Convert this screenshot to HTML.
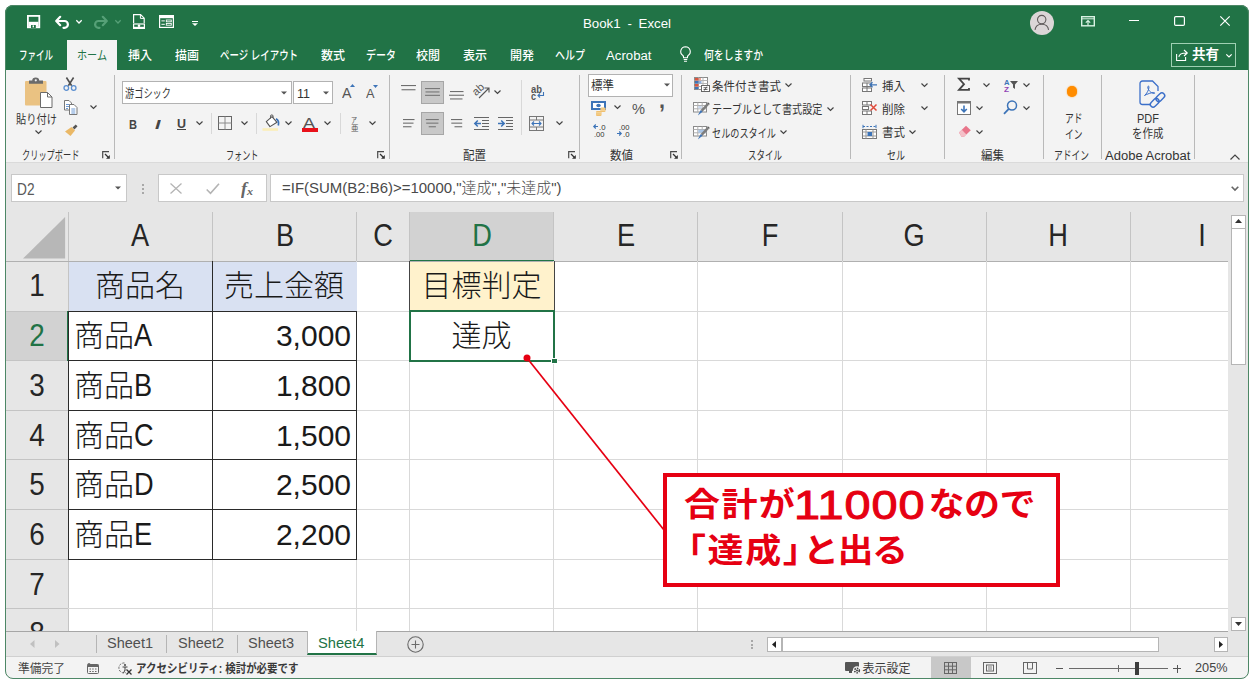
<!DOCTYPE html>
<html lang="ja">
<head>
<meta charset="utf-8">
<title>Book1 - Excel</title>
<style>
html,body{margin:0;padding:0;background:#fff;}
body{width:1255px;height:684px;position:relative;overflow:hidden;font-family:"Liberation Sans","Noto Sans CJK JP",sans-serif;font-size:12px;color:#444;}
#win{position:absolute;left:5px;top:5px;width:1244px;height:674px;border-radius:8px;overflow:hidden;background:#e6e6e6;}
#pg{position:absolute;left:-5px;top:-5px;width:1255px;height:684px;}
#frame{position:absolute;left:5px;top:5px;width:1242px;height:672px;border:1px solid #4d8766;border-radius:8px;pointer-events:none;}
.a{position:absolute;}
.t{position:absolute;white-space:nowrap;line-height:1;transform-origin:0 50%;}
.w{color:#fff;}
#title{left:5px;top:5px;width:1244px;height:65px;background:#217346;}
#hometab{left:67px;top:40px;width:50px;height:31px;background:#f3f3f3;}
#ribbon{left:5px;top:70px;width:1244px;height:92px;background:#f3f3f3;}
#ribline{left:5px;top:162px;width:1244px;height:1px;background:#dadada;}
.sep{position:absolute;width:1px;top:75px;height:84px;background:#b9b9b9;}
.sep2{position:absolute;width:1px;background:#d8d8d8;}
.box{position:absolute;background:#fff;border:1px solid #b2b2b2;box-sizing:border-box;}
.sel{position:absolute;background:#c8c8c8;border:1px solid #a6a6a6;box-sizing:border-box;}
.gl{font-size:11px;color:#444;}
.rt{font-size:12px;color:#333;}
svg{position:absolute;overflow:visible;}
/* grid */
#grid{left:6px;top:212px;width:1222px;height:419px;background:#fff;overflow:hidden;}
.ch{position:absolute;top:212px;height:49px;background:#e6e6e6;border-right:1px solid #c9c9c9;box-sizing:border-box;}
.rh{position:absolute;left:6px;width:62px;background:#e6e6e6;border-bottom:1px solid #c9c9c9;box-sizing:border-box;}
.hl{position:absolute;left:68px;width:1160px;height:1px;background:#d6d6d6;}
.vl{position:absolute;top:261px;width:1px;height:370px;background:#d6d6d6;}
.cell{position:absolute;font-size:30px;color:#1a1a1a;white-space:nowrap;line-height:1;font-weight:300;}
.hd{position:absolute;font-size:29px;color:#262626;white-space:nowrap;line-height:1;font-weight:300;}
.co{position:absolute;font-size:36px;font-weight:700;color:#e60012;white-space:nowrap;line-height:1;transform:scaleY(0.92);}
.dg{font-size:40px;font-weight:normal;-webkit-text-stroke:1px #e60012;letter-spacing:0.840px;transform:scaleX(1.17);transform-origin:0 50%;}
.la{display:inline-block;font-size:32px;transform:scaleX(.85);transform-origin:0 50%;margin-right:-3px;line-height:0;}
</style>
</head>
<body>
<div id="win"><div id="pg">

<!-- ===== title bar ===== -->
<div id="title" class="a"></div>
<div id="hometab" class="a"></div>
<div id="ribbon" class="a"></div>
<div id="ribline" class="a"></div>

<!--TITLE-->
<!-- quick access toolbar -->
<svg style="left:27px;top:15px" width="13" height="13" viewBox="0 0 13 13"><rect x=".9" y=".9" width="11.400" height="11.400" fill="none" stroke="#fff" stroke-width="1.800"/><rect x="1.500" y="6.800" width="10" height="5" fill="#fff"/><rect x="4" y="10" width="4.800" height="3" fill="#217346"/><rect x="5.600" y="10.400" width="1.400" height="2" fill="#fff"/></svg>
<svg style="left:55px;top:16px" width="15" height="12" viewBox="0 0 15 12"><path d="M5.200.800L1.200 5l4 4.200M1.500 5h8a3.400 3.400 0 0 1 0 6.800H8.500" fill="none" stroke="#fff" stroke-width="2.200" stroke-linecap="round" stroke-linejoin="round"/></svg>
<svg style="left:76px;top:20px" width="6" height="4" viewBox="0 0 6 4"><path d="M.3.300L3 3 5.700.300" fill="none" stroke="#fff" stroke-width="1.300"/></svg>
<svg style="left:93px;top:16px" width="15" height="12" viewBox="0 0 15 12"><path d="M9.800.800l4 4.200-4 4.200M13.500 5h-8a3.400 3.400 0 0 0 0 6.800H6.500" fill="none" stroke="#56a077" stroke-width="2.200" stroke-linecap="round" stroke-linejoin="round"/></svg>
<svg style="left:114.500px;top:20px" width="6" height="4" viewBox="0 0 6 4"><path d="M.3.300L3 3 5.700.300" fill="none" stroke="#56a077" stroke-width="1.300"/></svg>
<svg style="left:133px;top:14px" width="12" height="15" viewBox="0 0 12 15"><path d="M.6 9V.6h7l3.6 3.6V9" fill="none" stroke="#fff" stroke-width="1.2"/><path d="M7.4.8v3.6h3.6" fill="none" stroke="#fff" stroke-width="1"/><rect x=".6" y="10" width="10.8" height="3.4" fill="none" stroke="#fff" stroke-width="1.2"/><circle cx="6" cy="11.7" r="1.3" fill="#fff"/><rect x="0" y="14" width="12" height="1" fill="#fff"/></svg>
<svg style="left:159px;top:15px" width="15" height="13" viewBox="0 0 15 13"><rect x=".6" y=".6" width="13.8" height="11.8" fill="none" stroke="#fff" stroke-width="1.2"/><rect x=".6" y=".6" width="13.8" height="2.6" fill="#fff"/><rect x="7.3" y="5" width="5" height="1.8" fill="none" stroke="#fff" stroke-width=".9"/><rect x="7.3" y="8.4" width="5" height="1.8" fill="none" stroke="#fff" stroke-width=".9"/><rect x="2.4" y="5.4" width="3.4" height="1" fill="#fff"/><rect x="2.4" y="8.8" width="3.4" height="1" fill="#fff"/></svg>
<svg style="left:192px;top:21px" width="6" height="5" viewBox="0 0 6 5"><rect x="0" y="0" width="6" height="1" fill="#fff"/><path d="M0 2.2h6L3 5z" fill="#fff"/></svg>
<span class="t w" style="transform:scaleX(1.021);left:583px;top:17px;font-size:13px;word-spacing:3px">Book1 - Excel</span>
<!-- account + window buttons -->
<svg style="left:1030px;top:10.500px" width="24" height="24" viewBox="0 0 24 24"><circle cx="12" cy="12" r="12" fill="#dbd6d7"/><circle cx="11.700" cy="8.600" r="4.200" fill="none" stroke="#5f5a5a" stroke-width="1.100"/><path d="M5 18.800c.5-3.600 3.200-5.600 6.800-5.600s6.300 2 6.800 5.600" fill="none" stroke="#5f5a5a" stroke-width="1.100"/></svg>
<svg style="left:1081px;top:16px" width="14" height="11" viewBox="0 0 14 11"><rect x=".7" y=".7" width="12.600" height="9.100" fill="none" stroke="#d9f2e3" stroke-width="1.400"/><path d="M.7 2.800h12.600" stroke="#d9f2e3" stroke-width="1"/><path d="M7 9.500V4.500M4.800 6.700L7 4.500l2.200 2.200" fill="none" stroke="#d9f2e3" stroke-width="1.200"/></svg>
<div class="a" style="left:1129px;top:20px;width:10px;height:1px;background:#fff"></div>
<svg style="left:1174px;top:16px" width="11" height="10" viewBox="0 0 11 10"><rect x=".6" y=".6" width="9.800" height="8.800" rx="1.200" fill="none" stroke="#fff" stroke-width="1.200"/></svg>
<svg style="left:1220px;top:16px" width="10" height="10" viewBox="0 0 10 10"><path d="M.3.300l9.400 9.400M9.700.300L.3 9.700" stroke="#fff" stroke-width="1.200"/></svg>
<!-- menu tabs -->
<span class="t w" style="transform:scaleX(0.680);left:19px;top:49.500px;font-size:12.500px;font-weight:500">ファイル</span>
<span class="t" style="transform:scaleX(0.808);left:77px;top:49.500px;font-size:12.500px;color:#217346">ホーム</span>
<span class="t w" style="transform:scaleX(0.959);left:128px;top:49.500px;font-size:12.500px;font-weight:500">挿入</span>
<span class="t w" style="transform:scaleX(0.959);left:175px;top:49.500px;font-size:12.500px;font-weight:500">描画</span>
<span class="t w" style="transform:scaleX(0.756);left:220px;top:49.500px;font-size:12.500px;font-weight:500">ページ レイアウト</span>
<span class="t w" style="transform:scaleX(0.959);left:320.500px;top:49.500px;font-size:12.500px;font-weight:500">数式</span>
<span class="t w" style="transform:scaleX(0.800);left:365.500px;top:49.500px;font-size:12.500px;font-weight:500">データ</span>
<span class="t w" style="transform:scaleX(0.959);left:416px;top:49.500px;font-size:12.500px;font-weight:500">校閲</span>
<span class="t w" style="transform:scaleX(0.959);left:462.500px;top:49.500px;font-size:12.500px;font-weight:500">表示</span>
<span class="t w" style="transform:scaleX(0.959);left:509.500px;top:49.500px;font-size:12.500px;font-weight:500">開発</span>
<span class="t w" style="transform:scaleX(0.800);left:555px;top:49.500px;font-size:12.500px;font-weight:500">ヘルプ</span>
<span class="t w" style="transform:scaleX(1.056);left:606px;top:49.500px;font-size:12.500px;font-weight:500">Acrobat</span>
<svg style="left:680px;top:46px" width="11" height="17" viewBox="0 0 11 17"><path d="M5.500.7a4.800 4.800 0 0 0-2.600 8.800c.5.500.7 1.200.7 2.300h3.800c0-1.100.2-1.800.7-2.300A4.800 4.800 0 0 0 5.500.7z" fill="none" stroke="#fff" stroke-width="1.100"/><path d="M3.700 13.500h3.600M4 15.300h3" stroke="#fff" stroke-width="1.100"/></svg>
<span class="t w" style="transform:scaleX(0.787);left:704px;top:49.500px;font-size:12.500px;font-weight:500">何をしますか</span>
<!-- share -->
<div class="a" style="left:1171px;top:43px;width:65px;height:24px;box-sizing:border-box;border:1.500px solid #9fd0b3"></div>
<svg style="left:1176px;top:49px" width="12" height="12" viewBox="0 0 12 12"><path d="M.6 5v6.500h9V8" fill="none" stroke="#fff" stroke-width="1.100"/><path d="M2.800 7.800C3.200 5.200 5.500 4 10.500 4M8 1l3.300 3L8 7" fill="none" stroke="#fff" stroke-width="1.100" stroke-linejoin="round"/></svg>
<span class="t w" style="left:1192px;top:48px;font-size:13.500px;font-weight:bold">共有</span>
<svg style="left:1226px;top:54px" width="6" height="4" viewBox="0 0 6 4"><path d="M.3.300L3 3 5.700.300" fill="none" stroke="#fff" stroke-width="1.200"/></svg>
<!--/TITLE-->

<!--RIBBON-->
<svg style="left:25px;top:78px" width="28" height="30" viewBox="0 0 28 30"><rect x="0" y="3" width="21.500" height="24.500" rx="1" fill="#eac282"/><path d="M4 2.500h3.200a3.500 3 0 0 1 7 0H18v3.200H4z" fill="#6b6b6b"/><circle cx="10.800" cy="2.300" r="1.100" fill="#f3f3f3"/><path d="M15.500 14.500h7l4.500 4.500v10.500h-11.500z" fill="#fff" stroke="#6b6b6b" stroke-width="1"/><path d="M22.500 14.500v4.500h4.500" fill="none" stroke="#6b6b6b" stroke-width="1"/></svg>
<span class="t rt" style="transform:scaleX(0.854);left:16px;top:113.9px;font-size:12px;">貼り付け</span>
<svg style="left:34.5px;top:130.3px" width="7" height="4" viewBox="0 0 7 4"><path d="M.5.500l3 3 3-3" fill="none" stroke="#444" stroke-width="1.200"/></svg>
<svg style="left:63px;top:77px" width="14" height="14" viewBox="0 0 14 14"><path d="M3.400.5l5.300 8.300M10.600.5l-5.300 8.300" stroke="#505050" stroke-width="1.600" fill="none"/><circle cx="3.300" cy="11" r="2.300" fill="none" stroke="#5b8fd0" stroke-width="1.300"/><circle cx="10.700" cy="11" r="2.300" fill="none" stroke="#5b8fd0" stroke-width="1.300"/></svg>
<svg style="left:63.5px;top:100px" width="14" height="15" viewBox="0 0 14 15"><path d="M.5.500h4.500l2.500 2.500v7h-7z" fill="#fff" stroke="#777" stroke-width="1"/><path d="M2 4.500h3.500M2 6.500h3.500M2 8.500h2" stroke="#5b8fd0" stroke-width=".9"/><path d="M5.500 4.500h4.500l3 3v7h-7.500z" fill="#fff" stroke="#777" stroke-width="1"/><path d="M7.300 9h4M7.300 11h4M7.300 13h4" stroke="#5b8fd0" stroke-width=".9"/></svg>
<svg style="left:89.5px;top:104.8px" width="7" height="4" viewBox="0 0 7 4"><path d="M.5.500l3 3 3-3" fill="none" stroke="#444" stroke-width="1.200"/></svg>
<svg style="left:64px;top:124px" width="14" height="12" viewBox="0 0 14 12"><path d="M8.500 3.500l3.200-3 1.800 1.800-3 3.200z" fill="#555"/><path d="M1 7.500l6.500-4.500 3.500 3.500-4.500 5.500z" fill="#eab866"/></svg>
<span class="t rt" style="transform:scaleX(0.684);left:21.5px;top:150.4px;font-size:12px;">クリップボード</span>
<svg style="left:102px;top:151px" width="8" height="8" viewBox="0 0 8 8"><path d="M.7 7.200V.700h6.300" fill="none" stroke="#4a4a4a" stroke-width="1.200"/><path d="M3 3l3.500 3.500" stroke="#333" stroke-width="1.200"/><path d="M7.800 4v3.800H4z" fill="#333"/></svg>
<div class="sep" style="left:113.5px"></div>
<div class="box" style="left:122px;top:81px;width:170px;height:23px"></div>
<span class="t rt" style="transform:scaleX(0.766);left:124.5px;top:87.9px;font-size:12px;">游ゴシック</span>
<svg style="left:281px;top:91px" width="6" height="4" viewBox="0 0 6 4"><path d="M0 .5h6L3 3.500z" fill="#555"/></svg>
<div class="box" style="left:293px;top:81px;width:40px;height:23px"></div>
<span class="t rt" style="transform:scaleX(0.963);left:296.5px;top:87.4px;font-size:13px;">11</span>
<svg style="left:323px;top:91px" width="6" height="4" viewBox="0 0 6 4"><path d="M0 .5h6L3 3.500z" fill="#555"/></svg>
<span class="t rt" style="transform:scaleX(0.949);left:342px;top:85.4px;font-size:15px;color:#555">A</span>
<svg style="left:350px;top:84px" width="5" height="3" viewBox="0 0 5 3"><path d="M0 3L2.500 0 5 3z" fill="#3d74b8"/></svg>
<span class="t rt" style="transform:scaleX(0.943);left:366px;top:86.65px;font-size:13.5px;color:#555">A</span>
<svg style="left:373px;top:85px" width="5" height="3" viewBox="0 0 5 3"><path d="M0 0h5L2.500 3z" fill="#3d74b8"/></svg>
<span class="t rt" style="transform:scaleX(0.821);left:128.5px;top:117.65px;font-size:13.5px;font-weight:bold;color:#444">B</span>
<span class="t rt" style="transform:scaleX(1.461);left:154.5px;top:117.65px;font-size:13.5px;font-weight:bold;font-style:italic;color:#444">I</span>
<span class="t rt" style="transform:scaleX(0.958);left:176.5px;top:117.4px;font-size:13px;font-weight:bold;text-decoration:underline;color:#444">U</span>
<svg style="left:195.5px;top:120.8px" width="7" height="4" viewBox="0 0 7 4"><path d="M.5.500l3 3 3-3" fill="none" stroke="#444" stroke-width="1.200"/></svg>
<div class="sep2" style="left:211px;top:113px;height:21px"></div>
<svg style="left:218px;top:116px" width="14" height="14" viewBox="0 0 14 14"><rect x=".5" y=".5" width="13" height="13" fill="none" stroke="#666" stroke-width="1"/><path d="M7 .5v13M.5 7h13" stroke="#8a8a8a" stroke-width="1"/></svg>
<svg style="left:240.5px;top:120.8px" width="7" height="4" viewBox="0 0 7 4"><path d="M.5.500l3 3 3-3" fill="none" stroke="#444" stroke-width="1.200"/></svg>
<div class="sep2" style="left:256px;top:113px;height:21px"></div>
<svg style="left:264px;top:114px" width="15" height="17" viewBox="0 0 15 17"><path d="M2.300 7.600L8 2.600l5 5.700-7 4.300z" fill="#fff" stroke="#555" stroke-width="1.100" stroke-linejoin="round"/><path d="M6.500 4.500V2.200a1.300 1.300 0 0 1 2.600 0v1.500" fill="none" stroke="#555" stroke-width="1"/><path d="M12 4.800c2.600 1.500 3 4 2.300 6.700" fill="none" stroke="#3d74b8" stroke-width="1.700"/><rect x="-1.500" y="14.200" width="15.500" height="2.600" fill="#fbeeb8"/></svg>
<svg style="left:285.0px;top:120.8px" width="7" height="4" viewBox="0 0 7 4"><path d="M.5.500l3 3 3-3" fill="none" stroke="#444" stroke-width="1.200"/></svg>
<span class="t rt" style="transform:scaleX(1.198);left:303px;top:115.4px;font-size:15px;color:#555">A</span>
<div class="a" style="left:302px;top:128px;width:16px;height:3.500px;background:#e8111a"></div>
<svg style="left:324.0px;top:120.8px" width="7" height="4" viewBox="0 0 7 4"><path d="M.5.500l3 3 3-3" fill="none" stroke="#444" stroke-width="1.200"/></svg>
<div class="sep2" style="left:340px;top:113px;height:21px"></div>
<span class="t rt" style="transform:scaleX(0.750);left:351px;top:117.4px;font-size:8px;color:#555">ア</span>
<span class="t rt" style="transform:scaleX(0.938);left:351px;top:124.9px;font-size:8px;color:#555">亜</span>
<svg style="left:369.0px;top:120.8px" width="7" height="4" viewBox="0 0 7 4"><path d="M.5.500l3 3 3-3" fill="none" stroke="#444" stroke-width="1.200"/></svg>
<span class="t rt" style="transform:scaleX(0.677);left:226px;top:150.4px;font-size:12px;">フォント</span>
<svg style="left:377px;top:151px" width="8" height="8" viewBox="0 0 8 8"><path d="M.7 7.200V.700h6.300" fill="none" stroke="#4a4a4a" stroke-width="1.200"/><path d="M3 3l3.500 3.500" stroke="#333" stroke-width="1.200"/><path d="M7.800 4v3.800H4z" fill="#333"/></svg>
<div class="sep" style="left:388.5px"></div>
<svg style="left:401px;top:85.3px" width="16" height="8.4" viewBox="0 0 16 8.4"><rect x="0" y="0.0" width="15" height="1.100" fill="#6e6e6e"/><rect x="0.5" y="4.2" width="14" height="1.100" fill="#6e6e6e"/></svg>
<div class="sel" style="left:421px;top:81px;width:23px;height:23px"></div>
<svg style="left:425px;top:88.1px" width="16" height="10.2" viewBox="0 0 16 10.2"><rect x="0" y="0.0" width="15" height="1.100" fill="#777"/><rect x="0.5" y="3.4" width="14" height="1.100" fill="#777"/><rect x="0" y="6.8" width="15" height="1.100" fill="#777"/></svg>
<svg style="left:449px;top:91px" width="16" height="11.1" viewBox="0 0 16 11.1"><rect x="1" y="0.0" width="13.5" height="1.100" fill="#6e6e6e"/><rect x="0" y="3.7" width="15" height="1.100" fill="#6e6e6e"/><rect x="1" y="7.4" width="12.5" height="1.100" fill="#6e6e6e"/></svg>
<span class="t" style="left:472px;top:84px;font-size:11px;color:#555;transform:rotate(-42deg);transform-origin:50% 50%">ab</span>
<svg style="left:478px;top:86px" width="12" height="13" viewBox="0 0 12 13"><path d="M1 12L10.500 2.500M6.500 2h4.500v4.500" fill="none" stroke="#555" stroke-width="1.100"/></svg>
<svg style="left:493.5px;top:89.8px" width="7" height="4" viewBox="0 0 7 4"><path d="M.5.500l3 3 3-3" fill="none" stroke="#444" stroke-width="1.200"/></svg>
<svg style="left:402.5px;top:119.3px" width="16" height="10.8" viewBox="0 0 16 10.8"><rect x="0" y="0.0" width="11.5" height="1.100" fill="#6e6e6e"/><rect x="0" y="3.6" width="10.5" height="1.100" fill="#6e6e6e"/><rect x="0" y="7.2" width="8.5" height="1.100" fill="#6e6e6e"/></svg>
<div class="sel" style="left:421px;top:112px;width:23px;height:23px"></div>
<svg style="left:425px;top:119.3px" width="16" height="10.8" viewBox="0 0 16 10.8"><rect x="0.8" y="0.0" width="13" height="1.100" fill="#777"/><rect x="1.2" y="3.6" width="12.2" height="1.100" fill="#777"/><rect x="3.7" y="7.2" width="7.2" height="1.100" fill="#777"/></svg>
<svg style="left:448px;top:119.3px" width="16" height="10.8" viewBox="0 0 16 10.8"><rect x="3" y="0.0" width="11.2" height="1.100" fill="#6e6e6e"/><rect x="3.3" y="3.6" width="10.9" height="1.100" fill="#6e6e6e"/><rect x="6.5" y="7.2" width="7.7" height="1.100" fill="#6e6e6e"/></svg>
<svg style="left:474px;top:117px" width="15" height="13" viewBox="0 0 15 13"><rect x="0" y="0" width="15" height="1" fill="#666"/><rect x="0" y="12" width="15" height="1" fill="#666"/><rect x="8" y="3" width="7" height="1" fill="#666"/><rect x="8" y="6" width="7" height="1" fill="#666"/><rect x="8" y="9" width="7" height="1" fill="#666"/><path d="M7 6.500H1M3.800 3.500l-3 3 3 3" fill="none" stroke="#3d74b8" stroke-width="1.500"/></svg>
<svg style="left:498px;top:117px" width="15" height="13" viewBox="0 0 15 13"><rect x="0" y="0" width="15" height="1" fill="#666"/><rect x="0" y="12" width="15" height="1" fill="#666"/><rect x="8" y="3" width="7" height="1" fill="#666"/><rect x="8" y="6" width="7" height="1" fill="#666"/><rect x="8" y="9" width="7" height="1" fill="#666"/><path d="M0 6.500h6M3.200 3.500l3 3-3 3" fill="none" stroke="#3d74b8" stroke-width="1.500"/></svg>
<div class="sep2" style="left:521px;top:80px;height:55px"></div>
<span class="t rt" style="transform:scaleX(0.942);left:531px;top:85.4px;font-size:10px;font-weight:bold;color:#555">ab</span>
<span class="t rt" style="transform:scaleX(0.899);left:531px;top:92.4px;font-size:10px;font-weight:bold;color:#555">c</span>
<svg style="left:537px;top:92px" width="7" height="6" viewBox="0 0 7 6"><path d="M6.500 0v3.500H1M3 1.500l-2 2 2 2" fill="none" stroke="#3d74b8" stroke-width="1.100"/></svg>
<svg style="left:528.5px;top:115.5px" width="15" height="15" viewBox="0 0 15 15"><rect x=".5" y=".5" width="14" height="14" fill="none" stroke="#777" stroke-width="1"/><path d="M.5 4h14M.5 11h14M7.500.5v3.500M7.500 11v3.500" stroke="#777" stroke-width="1"/><path d="M3 7.500h9M5 5.500l-2 2 2 2M10 5.500l2 2-2 2" fill="none" stroke="#3d74b8" stroke-width="1.100"/></svg>
<svg style="left:555.5px;top:120.8px" width="7" height="4" viewBox="0 0 7 4"><path d="M.5.500l3 3 3-3" fill="none" stroke="#444" stroke-width="1.200"/></svg>
<span class="t rt" style="transform:scaleX(0.958);left:463px;top:150.4px;font-size:12px;">配置</span>
<svg style="left:568px;top:151px" width="8" height="8" viewBox="0 0 8 8"><path d="M.7 7.200V.700h6.300" fill="none" stroke="#4a4a4a" stroke-width="1.200"/><path d="M3 3l3.500 3.500" stroke="#333" stroke-width="1.200"/><path d="M7.800 4v3.800H4z" fill="#333"/></svg>
<div class="sep" style="left:579px"></div>
<div class="box" style="left:588px;top:74px;width:85px;height:22.500px"></div>
<span class="t rt" style="transform:scaleX(0.958);left:590.5px;top:79.9px;font-size:12px;">標準</span>
<svg style="left:663.500px;top:83px" width="6" height="4" viewBox="0 0 6 4"><path d="M0 .5h6L3 3.500z" fill="#555"/></svg>
<svg style="left:591px;top:100.5px" width="15" height="15" viewBox="0 0 15 15"><rect x="1" y="1" width="13" height="7" fill="#fff" stroke="#3d74b8" stroke-width="2"/><ellipse cx="7.500" cy="4.500" rx="2.200" ry="1.800" fill="#3d74b8"/><rect x="9.500" y="6.500" width="5" height="4.500" rx="1" fill="#f0c070"/><rect x="5" y="10" width="5.500" height="5" rx="1" fill="#f0c070"/><path d="M9.500 8h5M9.500 9.500h5M5 11.500h5.500M5 13h5.500" stroke="#f7ddb0" stroke-width=".6"/></svg>
<svg style="left:613.5px;top:105.3px" width="7" height="4" viewBox="0 0 7 4"><path d="M.5.500l3 3 3-3" fill="none" stroke="#444" stroke-width="1.200"/></svg>
<span class="t rt" style="transform:scaleX(0.942);left:631.5px;top:100.65px;font-size:15.5px;color:#555">%</span>
<span class="t rt" style="transform:scaleX(0.899);left:658.5px;top:87.9px;font-size:24px;font-weight:bold;color:#555">,</span>
<svg style="left:593px;top:124px" width="12" height="13" viewBox="0 0 12 13"><path d="M5 2.500H.8M2.800.5l-2 2 2 2" fill="none" stroke="#3d74b8" stroke-width="1.200"/></svg>
<span class="t rt" style="transform:scaleX(0.974);left:598.5px;top:124.4px;font-size:8px;color:#333">.0</span>
<span class="t rt" style="transform:scaleX(0.944);left:594px;top:131.4px;font-size:8px;color:#333">.00</span>
<span class="t rt" style="transform:scaleX(0.944);left:618.5px;top:124.4px;font-size:8px;color:#333">.00</span>
<svg style="left:617px;top:131px" width="6" height="5" viewBox="0 0 6 5"><path d="M0 2.500h4.200M2.200.5l2 2-2 2" fill="none" stroke="#3d74b8" stroke-width="1.200"/></svg>
<span class="t rt" style="transform:scaleX(0.974);left:622.5px;top:131.4px;font-size:8px;color:#333">.0</span>
<span class="t rt" style="transform:scaleX(0.958);left:610px;top:150.4px;font-size:12px;">数値</span>
<svg style="left:669.5px;top:151px" width="8" height="8" viewBox="0 0 8 8"><path d="M.7 7.200V.700h6.300" fill="none" stroke="#4a4a4a" stroke-width="1.200"/><path d="M3 3l3.500 3.500" stroke="#333" stroke-width="1.200"/><path d="M7.800 4v3.800H4z" fill="#333"/></svg>
<div class="sep" style="left:680.5px"></div>
<svg style="left:693.5px;top:77px" width="16" height="15" viewBox="0 0 16 15"><rect x=".5" y=".5" width="13" height="12" fill="#fff" stroke="#8a8a8a" stroke-width="1"/><path d="M4.500.5v12M9 .5v12M.5 3.500h13M.5 6.500h13M.5 9.500h13" stroke="#b5b5b5" stroke-width="1"/><rect x="1" y="1" width="3.500" height="2.500" fill="#d9553f"/><rect x="1" y="4" width="3.500" height="2.500" fill="#3d74b8"/><rect x="1" y="7" width="3.500" height="2.500" fill="#d9553f"/><rect x="1" y="10" width="3.500" height="2" fill="#3d74b8"/><rect x="5" y="4" width="2.500" height="2.500" fill="#8fb0dc"/><rect x="5" y="1" width="2" height="2.500" fill="#eba79a"/><rect x="7.500" y="8.500" width="8" height="6" fill="#fff" stroke="#666" stroke-width="1"/><path d="M9.500 10.700h4M9.500 12.500h4M12.800 9.600l-2.500 4" stroke="#444" stroke-width=".8"/></svg>
<span class="t rt" style="transform:scaleX(0.958);left:711.5px;top:80.9px;font-size:12px;">条件付き書式</span>
<svg style="left:785.0px;top:83.3px" width="7" height="4" viewBox="0 0 7 4"><path d="M.5.500l3 3 3-3" fill="none" stroke="#444" stroke-width="1.200"/></svg>
<svg style="left:693px;top:102px" width="17" height="14" viewBox="0 0 17 14"><rect x=".5" y=".5" width="13" height="9.500" fill="#fff" stroke="#8a8a8a" stroke-width="1"/><path d="M4.800.5v9.500M9.200.5v9.500M.5 3.500h13M.5 6.800h13" stroke="#b0b0b0" stroke-width="1"/><rect x="5.300" y="4" width="3.400" height="2.500" fill="#c9d8ee"/><path d="M14.200 1L16 2.800 9.500 9.800 7.700 8z" fill="#7d7d7d"/><path d="M7.700 8l1.800 1.800L4.800 13.500z" fill="#3d74b8"/><path d="M15 .2l1.800 1.800-.8.800-1.800-1.800z" fill="#555"/></svg>
<span class="t rt" style="transform:scaleX(0.844);left:711.5px;top:104.4px;font-size:12px;">テーブルとして書式設定</span>
<svg style="left:826.5px;top:106.8px" width="7" height="4" viewBox="0 0 7 4"><path d="M.5.500l3 3 3-3" fill="none" stroke="#444" stroke-width="1.200"/></svg>
<svg style="left:693px;top:125.5px" width="17" height="14" viewBox="0 0 17 14"><rect x=".5" y=".5" width="13" height="9.500" fill="#fff" stroke="#8a8a8a" stroke-width="1"/><path d="M4.800.5v9.500M9.200.5v9.500M.5 3.500h13M.5 6.800h13" stroke="#b0b0b0" stroke-width="1"/><rect x="5.300" y="3.800" width="7.800" height="3" fill="#a9c4e4"/><path d="M14.200 1L16 2.800 9.500 9.800 7.700 8z" fill="#7d7d7d"/><path d="M7.700 8l1.800 1.800L4.800 13.500z" fill="#3d74b8"/><path d="M15 .2l1.800 1.800-.8.800-1.800-1.800z" fill="#555"/></svg>
<span class="t rt" style="transform:scaleX(0.762);left:711.5px;top:127.9px;font-size:12px;">セルのスタイル</span>
<svg style="left:780.0px;top:130.3px" width="7" height="4" viewBox="0 0 7 4"><path d="M.5.500l3 3 3-3" fill="none" stroke="#444" stroke-width="1.200"/></svg>
<span class="t rt" style="transform:scaleX(0.708);left:747.5px;top:150.4px;font-size:12px;">スタイル</span>
<div class="sep" style="left:849.5px"></div>
<svg style="left:861.5px;top:77.5px" width="16" height="14" viewBox="0 0 16 14"><rect x=".5" y="5" width="9" height="3.500" fill="#fff" stroke="#777" stroke-width="1"/><rect x=".5" y="10" width="9" height="3.500" fill="#fff" stroke="#777" stroke-width="1"/><rect x="2" y=".5" width="7.500" height="2.500" fill="#fff" stroke="#777" stroke-width="1"/><path d="M5 5v8.500" stroke="#777" stroke-width="1"/><path d="M15 6.800H8M10.500 4.300L8 6.800l2.500 2.500" fill="none" stroke="#3d74b8" stroke-width="1.300"/></svg>
<span class="t rt" style="transform:scaleX(0.958);left:881.5px;top:80.9px;font-size:12px;">挿入</span>
<svg style="left:921.0px;top:83.3px" width="7" height="4" viewBox="0 0 7 4"><path d="M.5.500l3 3 3-3" fill="none" stroke="#444" stroke-width="1.200"/></svg>
<svg style="left:861.5px;top:101px" width="16" height="14" viewBox="0 0 16 14"><rect x=".5" y=".5" width="9" height="3.500" fill="#fff" stroke="#777" stroke-width="1"/><rect x=".5" y="10" width="9" height="3.500" fill="#fff" stroke="#777" stroke-width="1"/><rect x=".5" y="5.500" width="6" height="3" fill="#fff" stroke="#777" stroke-width="1"/><path d="M5 .5v3.500M5 10v3.500" stroke="#777" stroke-width="1"/><path d="M8.500 3.500l6 6M14.500 3.500l-6 6" stroke="#e04a3a" stroke-width="1.500"/></svg>
<span class="t rt" style="transform:scaleX(0.958);left:881.5px;top:103.9px;font-size:12px;">削除</span>
<svg style="left:921.0px;top:105.8px" width="7" height="4" viewBox="0 0 7 4"><path d="M.5.500l3 3 3-3" fill="none" stroke="#444" stroke-width="1.200"/></svg>
<svg style="left:861.5px;top:123.5px" width="16" height="16" viewBox="0 0 16 16"><path d="M1 2.500h13" stroke="#3d74b8" stroke-width="1" stroke-dasharray="2 1.500"/><path d="M1 .8v3.400M14 .8v3.400" stroke="#3d74b8" stroke-width="1"/><rect x=".5" y="5.500" width="14" height="9" fill="#fff" stroke="#777" stroke-width="1"/><path d="M4 5.500v9M11 5.500v9M.5 8h14M.5 12h14" stroke="#999" stroke-width="1"/><rect x="5.500" y="8" width="4.500" height="4" fill="#3d74b8"/></svg>
<span class="t rt" style="transform:scaleX(0.958);left:881.5px;top:127.4px;font-size:12px;">書式</span>
<svg style="left:909.0px;top:129.8px" width="7" height="4" viewBox="0 0 7 4"><path d="M.5.500l3 3 3-3" fill="none" stroke="#444" stroke-width="1.200"/></svg>
<span class="t rt" style="transform:scaleX(0.750);left:887px;top:150.4px;font-size:12px;">セル</span>
<div class="sep" style="left:944px"></div>
<svg style="left:958px;top:78px" width="12" height="12.5" viewBox="0 0 12 12.5"><path d="M11 2.500V.700H1l5 5.500-5 5.600h10V10" fill="none" stroke="#444" stroke-width="1.800"/></svg>
<svg style="left:983.0px;top:83.3px" width="7" height="4" viewBox="0 0 7 4"><path d="M.5.500l3 3 3-3" fill="none" stroke="#444" stroke-width="1.200"/></svg>
<span class="t rt" style="transform:scaleX(0.951);left:1004px;top:79.4px;font-size:8px;font-weight:bold;color:#3d74b8">A</span>
<span class="t rt" style="transform:scaleX(1.022);left:1004px;top:86.4px;font-size:8px;font-weight:bold;color:#9145b5">Z</span>
<svg style="left:1010px;top:81px" width="8" height="9" viewBox="0 0 8 9"><path d="M0 0h8L5 3.500V8L3 6.500V3.500z" fill="#555"/></svg>
<svg style="left:1022.5px;top:83.3px" width="7" height="4" viewBox="0 0 7 4"><path d="M.5.500l3 3 3-3" fill="none" stroke="#444" stroke-width="1.200"/></svg>
<svg style="left:957px;top:100.5px" width="14" height="14" viewBox="0 0 14 14"><rect x=".5" y=".5" width="13" height="13" fill="#fff" stroke="#777" stroke-width="1"/><rect x=".5" y=".5" width="13" height="2" fill="#777"/><path d="M7 4.500v6M4.200 8l2.800 2.800L9.800 8" fill="none" stroke="#3d74b8" stroke-width="1.600"/></svg>
<svg style="left:976.0px;top:106.3px" width="7" height="4" viewBox="0 0 7 4"><path d="M.5.500l3 3 3-3" fill="none" stroke="#444" stroke-width="1.200"/></svg>
<svg style="left:1003px;top:100px" width="15" height="15" viewBox="0 0 15 15"><circle cx="9" cy="5.500" r="4.500" fill="none" stroke="#3d74b8" stroke-width="1.500"/><path d="M5.800 8.800L1 13.800" stroke="#3d74b8" stroke-width="1.800"/></svg>
<svg style="left:1022.5px;top:106.3px" width="7" height="4" viewBox="0 0 7 4"><path d="M.5.500l3 3 3-3" fill="none" stroke="#444" stroke-width="1.200"/></svg>
<svg style="left:957.5px;top:125px" width="14" height="12" viewBox="0 0 14 12"><path d="M1 7.500L8 .8l4.800 4.500-6.800 6.500H3.500z" fill="#e8758a"/><path d="M1 7.500l2.800-2.700 4.600 4.600-2.400 2.400H3.500z" fill="#f4c0c8"/></svg>
<svg style="left:976.0px;top:129.8px" width="7" height="4" viewBox="0 0 7 4"><path d="M.5.500l3 3 3-3" fill="none" stroke="#444" stroke-width="1.200"/></svg>
<span class="t rt" style="transform:scaleX(0.958);left:981px;top:150.4px;font-size:12px;">編集</span>
<div class="sep" style="left:1043px"></div>
<div class="a" style="left:1066.500px;top:86px;width:10.500px;height:10.500px;border-radius:50%;background:#ff8c00;box-shadow:0 0 1.500px #ff8c00"></div>
<span class="t rt" style="transform:scaleX(0.729);left:1064.5px;top:113.4px;font-size:12px;">アド</span>
<span class="t rt" style="transform:scaleX(0.729);left:1064.5px;top:128.70000000000002px;font-size:12px;">イン</span>
<span class="t rt" style="transform:scaleX(0.729);left:1054px;top:150.4px;font-size:12px;">アドイン</span>
<div class="sep" style="left:1101px"></div>
<svg style="left:1139px;top:80px" width="26" height="28" viewBox="0 0 26 28"><path d="M12 24.500H3.500a2.500 2.500 0 0 1-2.500-2.500V3.500A2.500 2.500 0 0 1 3.500 1h10l5.500 5.500V11" fill="none" stroke="#3b6fc9" stroke-width="1.300"/><path d="M5.500 15.500c2-1.500 4.500-5.500 4.500-8.500 0-1.200-1.200-1.200-1.200 0 0 3 3 6 6 6.500 1.200.2 1.200-1 0-1-2.500 0-6.500 1.500-9.300 3z" fill="none" stroke="#3b6fc9" stroke-width="1"/><g transform="rotate(-45 18.500 20)" fill="none" stroke="#3b6fc9" stroke-width="1.400"><rect x="9.500" y="17.200" width="10" height="5.600" rx="2.800"/><rect x="17.500" y="17.200" width="10" height="5.600" rx="2.800"/></g></svg>
<span class="t rt" style="transform:scaleX(0.880);left:1137px;top:112.65px;font-size:12.5px;">PDF</span>
<span class="t rt" style="transform:scaleX(0.875);left:1132px;top:128.4px;font-size:12px;">を作成</span>
<span class="t rt" style="transform:scaleX(1.042);left:1104.5px;top:150.15px;font-size:12.5px;">Adobe Acrobat</span>
<div class="sep" style="left:1194px"></div>
<svg style="left:1229.5px;top:153.5px" width="10" height="6" viewBox="0 0 10 6"><path d="M.5 5.500l4.500-4.500 4.500 4.500" fill="none" stroke="#444" stroke-width="1.200"/></svg>
<!--/RIBBON-->

<!--FORMULA-->
<div class="box" style="left:11px;top:174px;width:116px;height:28px;border-color:#c8c8c8"></div>
<span class="t" style="transform:scaleX(0.856);left:17px;top:182.0px;font-size:16px;color:#5a5a5a">D2</span>
<svg style="left:115px;top:186px" width="6" height="4" viewBox="0 0 6 4"><path d="M0 .5h6L3 3.500z" fill="#555"/></svg>
<div class="a" style="left:141.500px;top:183.5px;width:2px;height:2px;background:#a8a8a8"></div>
<div class="a" style="left:141.500px;top:187.5px;width:2px;height:2px;background:#a8a8a8"></div>
<div class="a" style="left:141.500px;top:191.5px;width:2px;height:2px;background:#a8a8a8"></div>
<div class="box" style="left:157.500px;top:174px;width:109px;height:28px;border-color:#c8c8c8"></div>
<svg style="left:170px;top:183px" width="12" height="11" viewBox="0 0 12 11"><path d="M.5.500l11 10M11.500.500l-11 10" stroke="#b4b4b4" stroke-width="1.300"/></svg>
<svg style="left:205.5px;top:183px" width="14" height="11" viewBox="0 0 14 11"><path d="M.7 6.500l3.800 3.800L13 .7" fill="none" stroke="#b4b4b4" stroke-width="1.600"/></svg>
<span class="t" style="transform:scaleX(1.126);left:241px;top:180.5px;font-size:16px;font-family:'Liberation Serif',serif;font-style:italic;font-weight:bold;color:#666">f</span>
<span class="t" style="transform:scaleX(1.091);left:247px;top:185.5px;font-size:11px;font-family:'Liberation Serif',serif;font-style:italic;font-weight:bold;color:#666">x</span>
<div class="box" style="left:269.500px;top:174px;width:974px;height:28px;border-color:#c8c8c8"></div>
<span class="t" style="transform:scaleX(1.032);left:282px;top:180.75px;font-size:14.5px;color:#4a4a4a;font-weight:300">=IF(SUM(B2:B6)>=10000,"達成","未達成")</span>
<svg style="left:1231px;top:185.5px" width="8" height="5" viewBox="0 0 8 5"><path d="M.7.700l3.300 3.300 3.300-3.300" fill="none" stroke="#666" stroke-width="1.600"/></svg>
<!--/FORMULA-->

<!--GRID-->
<div class="a" id="grid" style=""></div>
<div class="a" style="left:6px;top:212px;width:1222px;height:49px;background:#e6e6e6"></div>
<div class="a" style="left:6px;top:261px;width:62px;height:370px;background:#e6e6e6"></div>
<div class="a" style="left:410px;top:212px;width:144px;height:49px;background:#d2d2d2"></div>
<div class="a" style="left:6px;top:311px;width:62px;height:49.5px;background:#d2d2d2"></div>
<svg style="left:23.4px;top:216.7px" width="43" height="42" viewBox="0 0 43 42"><path d="M42.100 0V41.600H0z" fill="#b7b7b7"/></svg>
<div class="a" style="left:212.0px;top:212px;width:1px;height:49px;background:#c4c4c4"></div>
<div class="a" style="left:356.2px;top:212px;width:1px;height:49px;background:#c4c4c4"></div>
<div class="a" style="left:409.3px;top:212px;width:1px;height:49px;background:#c4c4c4"></div>
<div class="a" style="left:553.3px;top:212px;width:1px;height:49px;background:#c4c4c4"></div>
<div class="a" style="left:697.3px;top:212px;width:1px;height:49px;background:#c4c4c4"></div>
<div class="a" style="left:841.5px;top:212px;width:1px;height:49px;background:#c4c4c4"></div>
<div class="a" style="left:985.7px;top:212px;width:1px;height:49px;background:#c4c4c4"></div>
<div class="a" style="left:1129.9px;top:212px;width:1px;height:49px;background:#c4c4c4"></div>
<div class="a" style="left:67.500px;top:212px;width:1px;height:419px;background:#c4c4c4"></div>
<div class="a" style="left:6px;top:260.500px;width:1222px;height:1px;background:#b0b0b0"></div>
<div class="a" style="left:6px;top:310.5px;width:62px;height:1px;background:#c4c4c4"></div>
<div class="a" style="left:68px;top:310.5px;width:1160px;height:1px;background:#d9d9d9"></div>
<div class="a" style="left:6px;top:360.0px;width:62px;height:1px;background:#c4c4c4"></div>
<div class="a" style="left:68px;top:360.0px;width:1160px;height:1px;background:#d9d9d9"></div>
<div class="a" style="left:6px;top:409.6px;width:62px;height:1px;background:#c4c4c4"></div>
<div class="a" style="left:68px;top:409.6px;width:1160px;height:1px;background:#d9d9d9"></div>
<div class="a" style="left:6px;top:459.3px;width:62px;height:1px;background:#c4c4c4"></div>
<div class="a" style="left:68px;top:459.3px;width:1160px;height:1px;background:#d9d9d9"></div>
<div class="a" style="left:6px;top:509.0px;width:62px;height:1px;background:#c4c4c4"></div>
<div class="a" style="left:68px;top:509.0px;width:1160px;height:1px;background:#d9d9d9"></div>
<div class="a" style="left:6px;top:558.8px;width:62px;height:1px;background:#c4c4c4"></div>
<div class="a" style="left:68px;top:558.8px;width:1160px;height:1px;background:#d9d9d9"></div>
<div class="a" style="left:6px;top:608.3px;width:62px;height:1px;background:#c4c4c4"></div>
<div class="a" style="left:68px;top:608.3px;width:1160px;height:1px;background:#d9d9d9"></div>
<div class="a" style="left:212.0px;top:261px;width:1px;height:370px;background:#d9d9d9"></div>
<div class="a" style="left:356.2px;top:261px;width:1px;height:370px;background:#d9d9d9"></div>
<div class="a" style="left:409.3px;top:261px;width:1px;height:370px;background:#d9d9d9"></div>
<div class="a" style="left:553.3px;top:261px;width:1px;height:370px;background:#d9d9d9"></div>
<div class="a" style="left:697.3px;top:261px;width:1px;height:370px;background:#d9d9d9"></div>
<div class="a" style="left:841.5px;top:261px;width:1px;height:370px;background:#d9d9d9"></div>
<div class="a" style="left:985.7px;top:261px;width:1px;height:370px;background:#d9d9d9"></div>
<div class="a" style="left:1129.9px;top:261px;width:1px;height:370px;background:#d9d9d9"></div>
<span class="hd" style="left:120.4px;top:218.800px;width:40px;text-align:center;font-size:32px;transform:scaleX(.85);color:#262626">A</span>
<span class="hd" style="left:264.6px;top:218.800px;width:40px;text-align:center;font-size:32px;transform:scaleX(.85);color:#262626">B</span>
<span class="hd" style="left:363.25px;top:218.800px;width:40px;text-align:center;font-size:32px;transform:scaleX(.85);color:#262626">C</span>
<span class="hd" style="left:461.79999999999995px;top:218.800px;width:40px;text-align:center;font-size:32px;transform:scaleX(.85);color:#217346">D</span>
<span class="hd" style="left:605.8px;top:218.800px;width:40px;text-align:center;font-size:32px;transform:scaleX(.85);color:#262626">E</span>
<span class="hd" style="left:749.9px;top:218.800px;width:40px;text-align:center;font-size:32px;transform:scaleX(.85);color:#262626">F</span>
<span class="hd" style="left:894.1px;top:218.800px;width:40px;text-align:center;font-size:32px;transform:scaleX(.85);color:#262626">G</span>
<span class="hd" style="left:1038.3000000000002px;top:218.800px;width:40px;text-align:center;font-size:32px;transform:scaleX(.85);color:#262626">H</span>
<span class="hd" style="left:1182px;top:218.800px;width:40px;text-align:center;font-size:32px;transform:scaleX(.85);color:#262626">I</span>
<span class="hd" style="left:17px;top:269.4px;width:40px;text-align:center;font-size:32px;transform:scaleX(.87);color:#262626">1</span>
<span class="hd" style="left:17px;top:319.4px;width:40px;text-align:center;font-size:32px;transform:scaleX(.87);color:#217346">2</span>
<span class="hd" style="left:17px;top:368.9px;width:40px;text-align:center;font-size:32px;transform:scaleX(.87);color:#262626">3</span>
<span class="hd" style="left:17px;top:418.5px;width:40px;text-align:center;font-size:32px;transform:scaleX(.87);color:#262626">4</span>
<span class="hd" style="left:17px;top:468.2px;width:40px;text-align:center;font-size:32px;transform:scaleX(.87);color:#262626">5</span>
<span class="hd" style="left:17px;top:517.9px;width:40px;text-align:center;font-size:32px;transform:scaleX(.87);color:#262626">6</span>
<span class="hd" style="left:17px;top:567.6999999999999px;width:40px;text-align:center;font-size:32px;transform:scaleX(.87);color:#262626">7</span>
<span class="hd" style="left:17px;top:617.1999999999999px;width:40px;text-align:center;font-size:32px;transform:scaleX(.87);color:#262626">8</span>
<div class="a" style="left:410px;top:259.500px;width:144px;height:1.500px;background:#217346"></div>
<div class="a" style="left:67px;top:311px;width:1.500px;height:49.5px;background:#217346"></div>
<div class="a" style="left:68.500px;top:261.500px;width:288px;height:49px;background:#d9e1f2"></div>
<div class="a" style="left:410px;top:261.500px;width:144px;height:49px;background:#fff2cc"></div>
<div class="a" style="left:409.3px;top:261px;width:1px;height:50px;background:#444"></div>
<div class="a" style="left:553.5px;top:261px;width:1px;height:50px;background:#444"></div>
<div class="a" style="left:68px;top:310.5px;width:289px;height:1px;background:#2a2a2a"></div>
<div class="a" style="left:68px;top:360.0px;width:289px;height:1px;background:#2a2a2a"></div>
<div class="a" style="left:68px;top:409.6px;width:289px;height:1px;background:#2a2a2a"></div>
<div class="a" style="left:68px;top:459.3px;width:289px;height:1px;background:#2a2a2a"></div>
<div class="a" style="left:68px;top:509.0px;width:289px;height:1px;background:#2a2a2a"></div>
<div class="a" style="left:68px;top:558.8px;width:289px;height:1px;background:#2a2a2a"></div>
<div class="a" style="left:212px;top:261px;width:1px;height:298.29999999999995px;background:#2a2a2a"></div>
<div class="a" style="left:356.2px;top:311px;width:1px;height:248.29999999999995px;background:#2a2a2a"></div>
<div class="a" style="left:67.8px;top:311px;width:1px;height:248.29999999999995px;background:#2a2a2a"></div>
<span class="cell" style="left:68px;top:271.4px;width:144px;text-align:center">商品名</span>
<span class="cell" style="left:212px;top:271.4px;width:144px;text-align:center">売上金額</span>
<span class="cell" style="left:410px;top:271.4px;width:143px;text-align:center">目標判定</span>
<span class="cell" style="left:410px;top:321.4px;width:143px;text-align:center">達成</span>
<span class="cell" style="left:74px;top:321.4px">商品<span class="la">A</span></span>
<span class="cell" style="left:212px;top:321.4px;width:139px;text-align:right">3,000</span>
<span class="cell" style="left:74px;top:370.9px">商品<span class="la">B</span></span>
<span class="cell" style="left:212px;top:370.9px;width:139px;text-align:right">1,800</span>
<span class="cell" style="left:74px;top:420.5px">商品<span class="la">C</span></span>
<span class="cell" style="left:212px;top:420.5px;width:139px;text-align:right">1,500</span>
<span class="cell" style="left:74px;top:470.2px">商品<span class="la">D</span></span>
<span class="cell" style="left:212px;top:470.2px;width:139px;text-align:right">2,500</span>
<span class="cell" style="left:74px;top:519.9px">商品<span class="la">E</span></span>
<span class="cell" style="left:212px;top:519.9px;width:139px;text-align:right">2,200</span>
<div class="a" style="left:408.500px;top:310px;width:146.500px;height:51.5px;box-sizing:border-box;border:2px solid #217346"></div>
<div class="a" style="left:552px;top:358.5px;width:4.500px;height:4.500px;background:#217346;border:1px solid #fff;box-sizing:content-box;margin:-1px"></div>
<div class="a" style="left:6px;top:631px;width:1243px;height:48px;background:#e6e6e6"></div>
<svg style="left:0px;top:0px" width="1255" height="684" viewBox="0 0 1255 684"><circle cx="527" cy="358" r="3.500" fill="#e60012"/><path d="M527 358L664 530" stroke="#e60012" stroke-width="1.700"/></svg>
<div class="a" style="left:662.500px;top:473px;width:397px;height:114px;box-sizing:border-box;border:4px solid #e60012;background:#fff"></div>
<span class="co" style="left:684px;top:487.400px;letter-spacing:1.400px">合計が</span>
<span class="co dg" style="left:793.600px;top:484.500px">11000</span>
<span class="co" style="left:928.500px;top:487.400px;letter-spacing:-0.500px">なので</span>
<span class="co" style="left:670px;top:533px;letter-spacing:1.600px">「達成」</span>
<span class="co" style="left:803px;top:533px;letter-spacing:-1.500px">と出る</span>
<div class="a" style="left:1228px;top:212px;width:21px;height:419px;background:#e6e6e6"></div>
<div class="a" style="left:1231px;top:214.500px;width:14.500px;height:150px;background:#fff;border:1px solid #b5b5b5;box-sizing:border-box"></div>
<div class="a" style="left:1231px;top:228px;width:14.500px;height:1px;background:#b5b5b5"></div>
<svg style="left:1235px;top:219px" width="7" height="4" viewBox="0 0 7 4"><path d="M0 4L3.500 0 7 4z" fill="#333"/></svg>
<div class="a" style="left:1231px;top:616.500px;width:14.500px;height:14.500px;background:#fff;border:1px solid #b5b5b5;box-sizing:border-box"></div>
<svg style="left:1235px;top:622px" width="7" height="4" viewBox="0 0 7 4"><path d="M0 0h7L3.500 4z" fill="#333"/></svg>
<!--/GRID-->

<!--BOTTOM-->
<div class="a" style="left:5px;top:631px;width:1223px;height:1px;background:#a6a6a6"></div>
<div class="a" style="left:5px;top:656.500px;width:1244px;height:23px;background:#f3f3f3"></div>
<div class="a" style="left:5px;top:656px;width:1244px;height:1px;background:#d0d0d0"></div>
<svg style="left:30px;top:640px" width="5" height="8" viewBox="0 0 5 8"><path d="M4.500 0v8L0 4z" fill="#c0c0c0"/></svg>
<svg style="left:55px;top:640px" width="5" height="8" viewBox="0 0 5 8"><path d="M0 0v8L4.500 4z" fill="#c0c0c0"/></svg>
<div class="a" style="left:95.5px;top:635px;width:1px;height:18px;background:#b5b5b5"></div>
<div class="a" style="left:166px;top:635px;width:1px;height:18px;background:#b5b5b5"></div>
<div class="a" style="left:236.5px;top:635px;width:1px;height:18px;background:#b5b5b5"></div>
<span class="t" style="transform:scaleX(1.037);left:107px;top:636.0px;font-size:14px;color:#505050;font-weight:300">Sheet1</span>
<span class="t" style="transform:scaleX(1.037);left:177.5px;top:636.0px;font-size:14px;color:#505050;font-weight:300">Sheet2</span>
<span class="t" style="transform:scaleX(1.037);left:248px;top:636.0px;font-size:14px;color:#505050;font-weight:300">Sheet3</span>
<div class="a" style="left:307px;top:631px;width:70px;height:24px;background:#fff;border-left:1px solid #b5b5b5;border-right:1px solid #b5b5b5;border-bottom:2px solid #217346;box-sizing:border-box"></div>
<span class="t" style="transform:scaleX(1.048);left:318px;top:636.0px;font-size:14px;color:#217346;font-weight:300">Sheet4</span>
<svg style="left:407px;top:635.5px" width="17" height="17" viewBox="0 0 17 17"><circle cx="8.500" cy="8.500" r="7.700" fill="none" stroke="#6a6a6a" stroke-width="1.100"/><path d="M8.500 4.500v8M4.500 8.500h8" stroke="#6a6a6a" stroke-width="1.100"/></svg>
<div class="a" style="left:750.500px;top:640px;width:2px;height:2px;background:#a8a8a8"></div>
<div class="a" style="left:750.500px;top:643.5px;width:2px;height:2px;background:#a8a8a8"></div>
<div class="a" style="left:750.500px;top:647px;width:2px;height:2px;background:#a8a8a8"></div>
<div class="a" style="left:767px;top:637px;width:14.500px;height:15px;background:#fff;border:1px solid #b5b5b5;box-sizing:border-box"></div>
<svg style="left:772px;top:641px" width="4" height="7" viewBox="0 0 4 7"><path d="M4 0v7L0 3.500z" fill="#222"/></svg>
<div class="a" style="left:781.500px;top:637px;width:377px;height:15px;background:#fff;border:1px solid #b5b5b5;box-sizing:border-box"></div>
<div class="a" style="left:1213.500px;top:637px;width:14.500px;height:15px;background:#fff;border:1px solid #b5b5b5;box-sizing:border-box"></div>
<svg style="left:1219px;top:641px" width="4" height="7" viewBox="0 0 4 7"><path d="M0 0v7L4 3.500z" fill="#222"/></svg>
<span class="t" style="transform:scaleX(0.979);left:18px;top:662.5px;font-size:12px;">準備完了</span>
<svg style="left:87px;top:662.5px" width="12" height="11" viewBox="0 0 12 11"><rect x=".5" y="1.500" width="11" height="9" rx="1" fill="none" stroke="#666" stroke-width="1"/><rect x=".5" y="1.500" width="11" height="2.500" fill="#666"/><path d="M2.500 6h1.500M5.200 6h1.500M8 6h1.500M2.500 8.500h1.500M5.200 8.500h1.500M8 8.500h1.500" stroke="#666" stroke-width="1"/><circle cx="2" cy="1.500" r="1.500" fill="#666"/></svg>
<svg style="left:118px;top:662px" width="15" height="13" viewBox="0 0 15 13"><path d="M6.500 1a5 5 0 1 0 1.500 9.500" fill="none" stroke="#666" stroke-width="1" stroke-dasharray="2.200 1.300"/><circle cx="7" cy="3" r="1" fill="#444"/><path d="M4.500 5h5M7 5v3.500M7 8l-1.500 3" stroke="#444" stroke-width="1" fill="none"/><path d="M8.500 7.500l5 5M13.500 7.500l-5 5" stroke="#333" stroke-width="1.300"/></svg>
<span class="t" style="transform:scaleX(0.874);left:136px;top:662.5px;font-size:12px;font-weight:bold;color:#3a3a3a">アクセシビリティ: 検討が必要です</span>
<svg style="left:845px;top:662px" width="17" height="13" viewBox="0 0 17 13"><rect x="0" y="0" width="14" height="9" rx="1" fill="#555"/><rect x="4" y="9" width="3" height="2" fill="#555"/><circle cx="12" cy="8.500" r="4.200" fill="#f3f3f3"/><circle cx="12" cy="8.500" r="2.300" fill="none" stroke="#444" stroke-width="1.600" stroke-dasharray="1.400 1"/><circle cx="12" cy="8.500" r="1" fill="#444"/></svg>
<span class="t" style="left:862.5px;top:662.5px;font-size:12px;color:#3a3a3a">表示設定</span>
<div class="a" style="left:930.500px;top:657px;width:40px;height:22px;background:#c8c8c8"></div>
<svg style="left:944px;top:662px" width="13" height="12" viewBox="0 0 13 12"><rect x=".5" y=".5" width="12" height="11" fill="none" stroke="#666" stroke-width="1"/><path d="M4.500.5v11M8.500.5v11M.5 4.200h12M.5 7.800h12" stroke="#666" stroke-width="1"/></svg>
<svg style="left:983px;top:662px" width="14" height="12" viewBox="0 0 14 12"><rect x=".5" y=".5" width="13" height="11" fill="none" stroke="#666" stroke-width="1"/><rect x="3.500" y="3" width="7" height="6" fill="none" stroke="#666" stroke-width="1"/><path d="M5 5h4M5 7h4" stroke="#666" stroke-width=".8"/></svg>
<svg style="left:1023px;top:662px" width="14" height="12" viewBox="0 0 14 12"><rect x=".5" y=".5" width="13" height="11" fill="none" stroke="#666" stroke-width="1"/><path d="M4.500.5v6.500h5V.500" fill="none" stroke="#666" stroke-width="1"/></svg>
<div class="a" style="left:1056px;top:668px;width:7px;height:1px;background:#555"></div>
<div class="a" style="left:1069px;top:668px;width:99px;height:1px;background:#6a6a6a"></div>
<div class="a" style="left:1118px;top:665px;width:1px;height:7px;background:#6a6a6a"></div>
<div class="a" style="left:1134.500px;top:662px;width:4px;height:13px;background:#3c3c3c"></div>
<div class="a" style="left:1173px;top:668px;width:8px;height:1px;background:#555"></div>
<div class="a" style="left:1176.500px;top:664.500px;width:1px;height:8px;background:#555"></div>
<span class="t" style="transform:scaleX(1.016);left:1195px;top:662.25px;font-size:12.5px;color:#444">205%</span>
<!--/BOTTOM-->

</div></div>
<div id="frame"></div>
</body>
</html>
